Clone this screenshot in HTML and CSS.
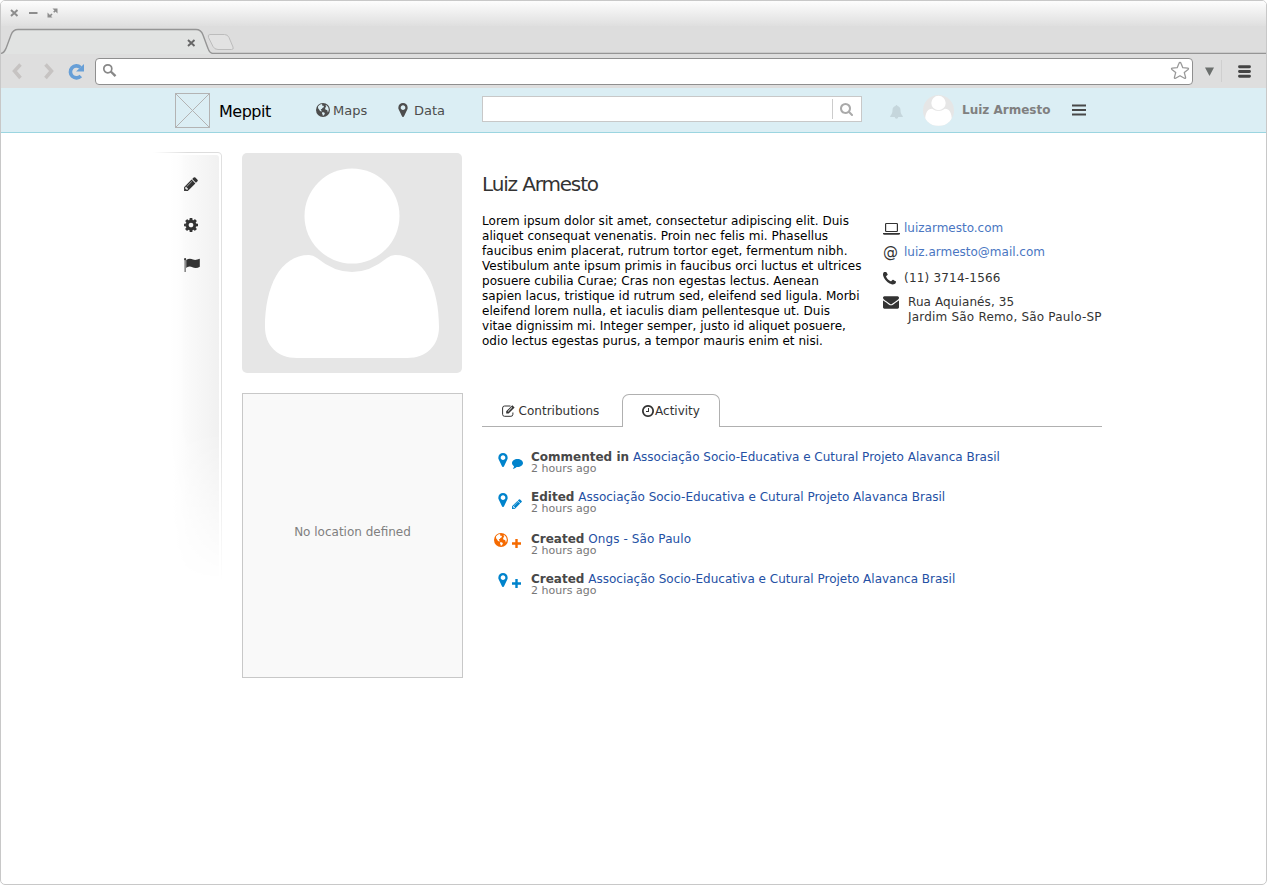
FILE: index.html
```html
<!DOCTYPE html>
<html lang="en">
<head>
<meta charset="utf-8">
<title>Meppit</title>
<link rel="stylesheet" href="styles.css">
</head>
<body>
<svg class="sprite" width="0" height="0" aria-hidden="true">
  <symbol id="marker" viewBox="384 128 1024 1536"><path d="M1152 640q0-106-75-181t-181-75-181 75-75 181 75 181 181 75 181-75 75-181zm256 0q0 109-33 179l-364 774q-16 33-47.5 52t-67.5 19-67.5-19-46.5-52l-365-774q-33-70-33-179 0-212 150-362t362-150 362 150 150 362z"/></symbol>
  <symbol id="pencil" viewBox="128 128 1536 1536"><path d="M491 1536l91-91-235-235-91 91v107h128v128h107zm523-928q0-22-22-22-10 0-17 7l-542 542q-7 7-7 17 0 22 22 22 10 0 17-7l542-542q7-7 7-17zm-54-192l416 416-832 832h-416v-416zm683 96q0 53-37 90l-166 166-416-416 166-165q36-38 90-38 53 0 91 38l235 234q37 39 37 91z"/></symbol>
  <symbol id="cog" viewBox="128 128 1536 1536"><path d="M1152 896q0-106-75-181t-181-75-181 75-75 181 75 181 181 75 181-75 75-181zm512-109v222q0 12-8 23t-20 13l-185 28q-19 54-39 91 35 50 107 138 10 12 10 25t-9 23q-27 37-99 108t-94 71q-12 0-26-9l-138-108q-44 23-91 38-16 136-29 186-7 28-36 28h-222q-14 0-24.5-8.5t-11.5-21.5l-28-184q-49-16-90-37l-141 107q-10 9-25 9-14 0-25-11-126-114-165-168-7-10-7-23 0-12 8-23 15-21 51-66.5t54-70.5q-27-50-41-99l-183-27q-13-2-21-12.5t-8-23.5v-222q0-12 8-23t19-13l186-28q14-46 39-92-40-57-107-138-10-12-10-24 0-10 9-23 26-36 98.5-107.5t94.5-71.5q13 0 26 10l138 107q44-23 91-38 16-136 29-186 7-28 36-28h222q14 0 24.5 8.5t11.5 21.5l28 184q49 16 90 37l142-107q9-9 24-9 13 0 25 10 129 119 165 170 7 8 7 22 0 12-8 23-15 21-51 66.5t-54 70.5q26 50 41 98l183 28q13 2 21 12.5t8 23.5z"/></symbol>
  <symbol id="flag" viewBox="0 0 16 14"><circle cx="1.1" cy="1.2" r="1.1"/><path d="M.6 1h1v13h-1z"/><path d="M2.2 2C4.500.4 7 .5 9 1.600 11.500 2.500 13.500 1.600 15.300.8q.5-.1.5.4v7.500q-2 1.200-4 1.300C9 10 7.500 8.500 5.500 8.600 4 8.700 3 9.600 2.200 10z"/></symbol>
  <symbol id="phone" viewBox="192 256 1408 1408"><path transform="translate(0 64)" d="M1600 1240q0 27-10 70.500t-21 68.500q-21 50-122 106-94 51-186 51-27 0-53-3.500t-57.500-12.500-47-14.500-55.500-20.500-49-18q-98-35-175-83-127-79-264-216t-216-264q-48-77-83-175-3-9-18-49t-20.500-55.500-14.500-47-12.500-57.500-3.500-53q0-92 51-186 56-101 106-122 25-11 68.500-21t70.500-10q14 0 21 3 18 6 53 76 11 19 30 54t35 63.500 31 53.500q3 4 17.500 25t21.500 35.500 7 28.500q0 20-28.500 50t-62 55-62 53-28.500 46q0 9 5 22.500t8.500 20.500 14 24 11.500 19q76 137 174 235t235 174q2 1 19 11.500t24 14 20.500 8.500 22.500 5q18 0 46-28.500t53-62 55-62 50-28.500q14 0 28.500 7t35.500 21.500 25 17.500q25 15 53.500 31t63.500 35 54 30q70 35 76 53 3 7 3 21z"/></symbol>
  <symbol id="envelope" viewBox="0 256 1792 1408"><path d="M1792 710v794q0 66-47 113t-113 47h-1472q-66 0-113-47t-47-113v-794q44 49 101 87 362 246 497 345 57 42 92.500 65.500t94.500 48 110 24.500h2q51 0 110-24.500t94.500-48 92.500-65.500q170-123 498-345 57-39 100-87zm0-294q0 79-49 151t-122 123q-376 261-468 325-10 7-42.500 31t-54 38.500-52 32.500-57.500 27-50 9h-2q-23 0-50-9t-57.500-27-52-32.500-54-38.500-42.500-31q-91-64-262-182.500t-205-142.500q-62-42-117-115.500t-55-136.500q0-78 41.500-130t118.500-52h1472q65 0 112.500 47t47.500 113z"/></symbol>
  <symbol id="clock" viewBox="128 128 1536 1536"><path d="M1024 544v448q0 14-9 23t-23 9h-320q-14 0-23-9t-9-23v-64q0-14 9-23t23-9h224v-352q0-14 9-23t23-9h64q14 0 23 9t9 23zm416 352q0-148-73-273t-198-198-273-73-273 73-198 198-73 273 73 273 198 198 273 73 273-73 198-198 73-273zm224 0q0 209-103 385.500t-279.500 279.500-385.500 103-385.500-103-279.500-279.500-103-385.500 103-385.500 279.500-279.500 385.500-103 385.500 103 279.500 279.500 103 385.500z"/></symbol>
  <symbol id="search" viewBox="64 128 1664 1664"><path d="M1216 832q0-185-131.500-316.500t-316.500-131.500-316.500 131.500-131.500 316.500 131.500 316.500 316.500 131.500 316.500-131.500 131.500-316.500zm512 832q0 52-38 90t-90 38q-54 0-90-38l-343-342q-179 124-399 124-143 0-273.500-55.500t-225-150-150-225-55.500-273.500 55.500-273.500 150-225 225-150 273.500-55.500 273.500 55.500 225 150 150 225 55.500 273.500q0 220-124 399l343 343q37 37 37 90z"/></symbol>
  <symbol id="globe" viewBox="0 0 14 14"><path fill-rule="evenodd" d="M7 0a7 7 0 1 1 0 14A7 7 0 0 1 7 0zM5.200 1.100L3.400 1.900 2 3.400 2.100 5.200 3.100 6.600 4 8 5.300 8.600 6 8 5 7.300 4.800 6.300 5.900 5.900 6.400 4.900 7.700 4.200 7.900 3.200 7 2.600 6 2.700 6.300 1.400zM6.200 9.200L5.900 10.300 6.600 11.400 6.800 12.700 7.600 12.600 8.600 11.200 8.800 10.100 7.600 9.300zM10 1.900L9.500 3 10.300 3.600 9.300 4.800 9.100 6 9.800 6.800 11 6.900 11.600 7.900 11.600 9.400 12.400 8.600 12.800 6.800 12.300 4.600 11.300 2.900z"/></symbol>
  <symbol id="plus" viewBox="0 0 9 9"><path d="M3.300 0h2.400v3.300h3.300v2.400h-3.300v3.300h-2.400v-3.300h-3.300v-2.400h3.300z"/></symbol>
  <symbol id="comment" viewBox="0 0 11 10"><path d="M5.500 0C8.600 0 11 1.800 11 4s-2.400 4-5.500 4L4.600 7.900C3.600 9 2.100 9.600.8 9.700c.8-.7 1.200-1.500 1.200-2.500C.8 6.400 0 5.300 0 4c0-2.200 2.400-4 5.500-4z"/></symbol>
  <symbol id="bell" viewBox="0 0 13 14"><path d="M6.500 0q.9 0 .9 1C9.500 1.500 10.500 3 10.500 5c0 3 .8 4.500 2.500 6.200 0 .5-.3.800-.8.800H8.200a1.700 1.700 0 0 1-3.400 0H.8Q0 12 0 11.200C1.700 9.500 2.500 8 2.500 5c0-2 1-3.500 3.100-4q0-1 .9-1z"/></symbol>
  <symbol id="laptop" viewBox="0 0 17 12"><path fill-rule="evenodd" d="M3.300 0h10.400q1.300 0 1.300 1.300v6.400q0 1.300-1.300 1.300h-10.400q-1.300 0-1.300-1.300v-6.400q0-1.300 1.300-1.300zM3.200 1.100v6.800h10.600v-6.800zM0 9.900h17v.8q0 1.100-1.600 1.100h-13.800q-1.600 0-1.600-1.100z"/></symbol>
  <symbol id="edit" viewBox="0 0 13 12"><path d="M8.500 1H2.600Q.6 1 .6 3v6.300q0 2 2 2h6.300q2 0 2-2V7.500" fill="none" stroke="currentColor" stroke-width="1"/><path fill-rule="evenodd" d="M10.300.3l2.300 2.300-6 6H4.200V6.300zM9.800 2.100L5.700 6.200l.5.500 4.100-4.100z"/></symbol>
  <symbol id="person" viewBox="0 0 220 220"><circle cx="110" cy="63" r="47.500"/><path d="M67 102q4 0 8 3 17 14 35 14t35-14q4-3 8-3c29 0 44 32 44 72 0 18-12 31-32 31H55c-20 0-32-13-32-31 0-40 15-72 44-72z"/></symbol>
</svg>
<div class="window">
  <div class="titlebar">
    <svg width="60" height="26" viewBox="1 1 60 26" fill="none" stroke="#8d8d8d" stroke-width="2"><path d="M11 10l6.500 6M17.500 10l-6.500 6M29 13h8.500"/><path d="M52.500 8.500h5v5zM47.500 12.500v5h5z" fill="#8d8d8d" stroke="none"/><path d="M56 10l-3 3M52 14l-3 3" stroke-width="1.700" stroke-dasharray="3.200 9"/></svg>
  </div>
  <div class="tabstrip">
    <svg width="1265" height="28" viewBox="1 26 1265 28" fill="none">
      <path d="M1 54q3-1 5-5l5-14q2-5.500 7-5.500H196q5 0 7 5.500l5.500 14q1.500 4.500 4 5z" fill="#e1e3e2"/>
      <path d="M1 53.400q3-.4 5-5l5-13.400q2-5.500 7-5.500H196q5 0 7 5.500l5 13.400q1.500 4.500 4.500 5H1266" stroke="#959595" stroke-width="1.400"/>
      <path d="M210 34.500h14.500q3.300 0 4.500 3l4 9.500q1 2.500-1.500 2.500H218q-3.500 0-5-3l-4.500-9q-1-3 1.500-3z" fill="#e2e2e2" stroke="#bcbcbc"/>
      <path d="M188 40l6.500 6M194.500 40l-6.500 6" stroke="#666" stroke-width="1.900"/>
    </svg>
  </div>
  <div class="toolbar">
    <svg width="94" height="34" viewBox="1 54 94 34" fill="none"><path d="M20.500 64.500l-6 6.500 6 7M45.500 64.500l6 6.500-6 7" stroke="#c6c3c2" stroke-width="3.500"/><path d="M80.500 67.500a6 6 0 1 0 .3 8.500" stroke="#679fd7" stroke-width="3.600"/><path d="M84 64v7.500h-8z" fill="#679fd7"/></svg>
    <div class="address">
      <svg width="16" height="16" viewBox="0 0 16 16" fill="none" stroke="#888"><circle cx="5.800" cy="5.800" r="4" stroke-width="1.700"/><path d="M8.800 8.500l4.700 4.700" stroke-width="2.400"/></svg>
      <svg width="20" height="20" viewBox="0 0 20 20" fill="#fff" stroke="#999" stroke-width="1.300" stroke-linejoin="round"><path d="M10 1.500q.7 0 1 .8l1.800 4.400 4.900.4q1.400.3.400 1.300l-3.800 3.200 1.300 4.700q.2 1.500-1.200.9L10 14.700l-4.400 2.500q-1.400.6-1.200-.9l1.300-4.700-3.800-3.200q-1-1 .4-1.300l4.900-.4L9 2.300q.3-.8 1-.8z"/></svg>
    </div>
    <svg width="73" height="34" viewBox="1193 54 73 34"><path d="M1206 67.500h9l-4.500 8.500z" fill="#6b6f6d"/><path d="M1222.500 60v22" stroke="#cfcfcf"/><path d="M1240.500 66.800h10M1240.500 71.500h10M1240.500 76.200h10" stroke="#444" stroke-width="2.900" stroke-linecap="round"/></svg>
  </div>
  <header class="header">
    <svg width="35" height="35" viewBox="0 0 35 35" fill="none" stroke="#b3b3b3"><rect x=".5" y=".5" width="34" height="34"/><path d="M.5.5l34 34M34.500.5l-34 34"/></svg>
    <span class="brand">Meppit</span>
    <a class="nav nav-maps"><svg width="14" height="14"><use href="#globe"/></svg>Maps</a>
    <a class="nav nav-data"><svg width="10" height="14"><use href="#marker"/></svg>Data</a>
    <div class="searchbox"><div class="searchbtn"><svg width="13" height="13"><use href="#search"/></svg></div></div>
    <svg class="bell" width="13" height="14"><use href="#bell"/></svg>
    <svg width="31" height="31" viewBox="0 0 31 31"><defs><clipPath id="round"><circle cx="15.500" cy="15.500" r="15.500"/></clipPath></defs><g clip-path="url(#round)"><path d="M0 0h31v31H0z" fill="#e6e6e6"/><g fill="#fff"><circle cx="15.500" cy="8" r="7.200"/><path d="M9 13.800q6.500 4.500 13 0c4.500 0 6.800 4.500 6.800 11v6H2.200v-6c0-6.500 2.300-11 6.800-11z"/></g></g></svg>
    <span class="user">Luiz Armesto</span>
    <svg width="14" height="12" viewBox="0 0 14 12"><path d="M0 1.500h14M0 6h14M0 10.500h14" stroke="#484848" stroke-width="2.200"/></svg>
  </header>
  <main class="page">
    <aside class="rail">
      <svg width="14" height="14"><use href="#pencil"/></svg>
      <svg width="14" height="14"><use href="#cog"/></svg>
      <svg class="flagicon" width="16" height="14"><use href="#flag"/></svg>
    </aside>
    <div class="left">
      <div class="photo"><svg width="220" height="220"><use href="#person"/></svg></div>
      <div class="location">No location defined</div>
    </div>
    <div class="right">
      <h1 class="name">Luiz Armesto</h1>
      <div class="info">
        <p class="bio">Lorem ipsum dolor sit amet, consectetur adipiscing elit. Duis<br>aliquet consequat venenatis. Proin nec felis mi. Phasellus<br>faucibus enim placerat, rutrum tortor eget, fermentum nibh.<br>Vestibulum ante ipsum primis in faucibus orci luctus et ultrices<br>posuere cubilia Curae; Cras non egestas lectus. Aenean<br>sapien lacus, tristique id rutrum sed, eleifend sed ligula. Morbi<br>eleifend lorem nulla, et iaculis diam pellentesque ut. Duis<br>vitae dignissim mi. Integer semper, justo id aliquet posuere,<br>odio lectus egestas purus, a tempor mauris enim et nisi.</p>
        <ul class="contact">
          <li><svg width="17" height="12"><use href="#laptop"/></svg><a>luizarmesto.com</a></li>
          <li><span class="at">@</span><a>luiz.armesto@mail.com</a></li>
          <li class="tel"><svg width="13" height="13"><use href="#phone"/></svg><span>(11) 3714-1566</span></li>
          <li class="addr"><svg width="16" height="13"><use href="#envelope"/></svg><span>Rua Aquianés, 35<br><span class="street">Jardim São Remo, São Paulo-SP</span></span></li>
        </ul>
      </div>
      <div class="tabs">
        <a class="tab"><svg width="13" height="12"><use href="#edit"/></svg>Contributions</a>
        <a class="tab active"><svg width="12" height="12"><use href="#clock"/></svg>Activity</a>
      </div>
      <ul class="feed">
        <li><svg class="pin" width="10" height="14"><use href="#marker"/></svg><svg class="act" width="11" height="10"><use href="#comment"/></svg><div><b>Commented in</b> <a>Associação Socio-Educativa e Cutural Projeto Alavanca Brasil</a><small>2 hours ago</small></div></li>
        <li class="tall"><svg class="pin" width="10" height="14"><use href="#marker"/></svg><svg class="act" width="10" height="10"><use href="#pencil"/></svg><div><b>Edited</b> <a>Associação Socio-Educativa e Cutural Projeto Alavanca Brasil</a><small>2 hours ago</small></div></li>
        <li class="map new"><svg class="world" width="14" height="14"><use href="#globe"/></svg><svg class="act" width="9" height="9"><use href="#plus"/></svg><div><b>Created</b> <a>Ongs - São Paulo</a><small>2 hours ago</small></div></li>
        <li class="new"><svg class="pin" width="10" height="14"><use href="#marker"/></svg><svg class="act" width="9" height="9"><use href="#plus"/></svg><div><b>Created</b> <a>Associação Socio-Educativa e Cutural Projeto Alavanca Brasil</a><small>2 hours ago</small></div></li>
      </ul>
    </div>
  </main>
</div>
</body>
</html>
```
FILE: styles.css
```css
* { box-sizing: border-box; }
body { margin: 0; background: #fff; font: 12px/15px "DejaVu Sans", Verdana, sans-serif; color: #333; }
svg { display: block; flex: none; }
svg:not([fill]) { fill: currentColor; }
.sprite { position: absolute; }
.window { height: 885px; border: 1px solid #c8c8c8; border-radius: 5px; overflow: hidden; background: #fff; }
.titlebar { height: 25px; background: linear-gradient(#fdfdfd, #dfdfdf); display: flex; }
.tabstrip { height: 28px; background: #dddddd; }
.toolbar { height: 34px; background: #dedede; display: flex; align-items: center; }
.address { width: 1098px; height: 27px; margin-right: -1px; border: 1px solid #8f8f8f; border-radius: 4px; background: #fff; display: flex; align-items: center; justify-content: space-between; padding: 0 2px 0 6px; }
.header { height: 45px; background: #dbeef4; border-bottom: 1px solid #9bd5e0; display: flex; align-items: center; padding-left: 174px; color: #4d4d4d; }
.brand { width: 106px; padding: 2px 0 0 9px; font-size: 16px; letter-spacing: -.5px; color: #000; }
.nav { display: flex; align-items: center; font-size: 13px; gap: 3px; }
.nav-maps { width: 82px; }
.nav-data { width: 84px; gap: 6px; }
.searchbox { width: 380px; height: 26px; margin-top: -3px; background: #fff; border: 1px solid #c8c8c8; display: flex; justify-content: flex-end; padding: 2px 0; }
.searchbtn { width: 29px; border-left: 1px solid #ccc; padding: 4px 7px; color: #aaa; }
.bell { margin: 4px 20px 0 28px; color: #c5d6dc; }
.user { width: 118px; padding: 1px 0 0 8px; font-weight: bold; color: #808080; }
.page { display: flex; padding: 20px 0 0 152px; }
.rail { width: 69px; height: 430px; margin: -1px 20px 0 0; border-right: 1px solid #e0e0e0; border-top: 1px solid #ddd; border-radius: 0 4px 0 0; box-shadow: inset -2px 2px #fff; background: linear-gradient(90deg, #fff 25%, #f0f0f0); -webkit-mask-image: linear-gradient(#000 65%, transparent), linear-gradient(90deg, transparent, #000 50%); -webkit-mask-composite: source-in; mask-composite: intersect; padding: 24px 0 0 31px; display: flex; flex-direction: column; gap: 27px; }
.flagicon { margin-top: -1px; }
.left { width: 240px; }
.photo { width: 220px; height: 220px; background: #e6e6e6; border-radius: 5px; color: #fff; }
.location { width: 221px; height: 285px; margin-top: 20px; border: 1px solid #c8c8c8; background: #f9f9f9; display: flex; align-items: center; justify-content: center; color: #808080; padding-bottom: 6px; }
.right { width: 620px; padding-top: 18px; }
.name { margin: 0; font-size: 20px; font-weight: normal; line-height: 26px; letter-spacing: -1.15px; color: #333; }
.info { height: 197px; padding-top: 16px; display: flex; }
.bio { width: 401px; margin: 0; padding-top: 1px; color: #000; white-space: nowrap; letter-spacing: .03px; }
.contact { list-style: none; margin: 0; padding: 8px 0 0; white-space: nowrap; }
.contact li { display: flex; align-items: center; height: 15px; margin-bottom: 9px; }
.contact svg { margin-right: 4px; }
.contact a { color: #4a76c2; }
.at { width: 21px; font-size: 15px; }
.contact .tel { margin-top: 11px; letter-spacing: .2px; }
.contact .tel svg { margin-right: 8px; }
.contact .addr { height: 30px; align-items: flex-start; letter-spacing: .1px; }
.contact .addr svg { margin: 1px 9px 0 0; }
.street { letter-spacing: .2px; }
.tabs { height: 33px; border-bottom: 1px solid #b0b0b0; display: flex; }
.tab { width: 140px; height: 33px; display: flex; align-items: center; justify-content: center; gap: 4px; padding: 1px 3px 0 0; }
.active { width: 98px; gap: 1px; padding: 0; border: 1px solid #b0b0b0; border-bottom: 0; border-radius: 7px 7px 0 0; background: #fff; }
.feed { list-style: none; margin: 0; padding: 23px 0 0 16px; white-space: nowrap; }
.feed li { display: flex; width: 533px; height: 40px; color: #0083cc; }
.feed .tall { height: 42px; }
.pin { margin-top: 3px; }
.act { margin: 9px 0 0 4px; }
.world { margin: 1px 0 0 -4px; }
.new .pin { margin-top: 1px; }
.new .act { margin-top: 7px; }
.feed div { width: 500px; margin-left: auto; }
.feed .map { color: #f56a00; }
.feed b { color: #484848; }
.feed a { color: #2450a4; }
.feed .map a { letter-spacing: .1px; }
.feed small { display: block; font-size: 11px; line-height: 12px; margin-top: -2px; color: #777; }
```
